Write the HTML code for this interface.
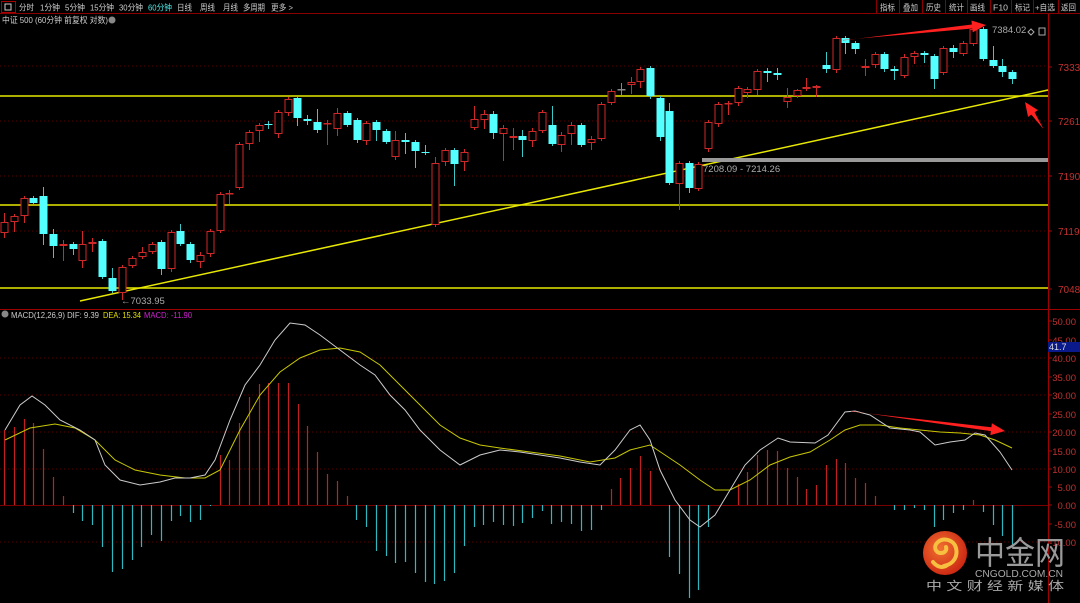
<!DOCTYPE html>
<html><head><meta charset="utf-8"><style>
html,body{margin:0;padding:0;background:#000;width:1080px;height:603px;overflow:hidden;font-family:"Liberation Sans","Noto Sans CJK SC",sans-serif}
svg{position:absolute;left:0;top:0}
</style></head><body>
<svg id="s" width="1080" height="603" xmlns="http://www.w3.org/2000/svg"></svg>
<script>
var s=document.getElementById('s'),h='';
function L(x1,y1,x2,y2,c,w,d){h+='<line x1="'+x1+'" y1="'+y1+'" x2="'+x2+'" y2="'+y2+'" stroke="'+c+'" stroke-width="'+(w||1)+'"'+(d?' stroke-dasharray="'+d+'"':'')+'/>';}
function T(x,y,t,c,sz,a,tl){h+='<text x="'+x+'" y="'+y+'" fill="'+c+'" font-size="'+(sz||10)+'"'+(a?' text-anchor="'+a+'"':'')+(tl?' textLength="'+tl+'" lengthAdjust="spacingAndGlyphs"':'')+' font-family="Liberation Sans,Noto Sans CJK SC,sans-serif">'+t+'</text>';}
// top bar
L(0,13.5,1080,13.5,'#8a0000');
h+='<rect x="1.5" y="1.5" width="14" height="11" fill="none" stroke="#a00"/><rect x="5" y="4" width="6" height="6" fill="none" stroke="#ccc"/>';
var tabs=[[19,'分时',15],[40,'1分钟',20],[65,'5分钟',20],[90,'15分钟',24],[119,'30分钟',24],[148,'60分钟',24],[177,'日线',15],[200,'周线',15],[223,'月线',15],[243,'多周期',22],[271,'更多 >',22]];
tabs.forEach(function(t){T(t[0],10.5,t[1],t[0]==148?'#4de8e8':'#ccc',8.5,null,t[2]);});
var rb=[[880,'指标',15],[903,'叠加',15],[926,'历史',15],[949,'统计',15],[970,'画线',15],[993,'F10',15],[1015,'标记',15],[1035,'+自选',20],[1061,'返回',15]];
[876,899,922,945,967,990,1011,1033,1058].forEach(function(x){L(x+.5,0,x+.5,13,'#8a0000');});
rb.forEach(function(t){T(t[0],10.5,t[1],'#ccc',8.5,null,t[2]);});
T(2,23,'中证 500 (60分钟 前复权 对数)','#ccc',8.5,null,106);
h+='<circle cx="112" cy="20" r="3.5" fill="#888"/>';
// grid
[66,121,176,231,288].forEach(function(y){L(0,y,1048,y,'#5a0000',1,'1 3');});
L(1048.5,14,1048.5,603,'#a00000');
[[67,'7333'],[121,'7261'],[176,'7190'],[231,'7119'],[289,'7048']].forEach(function(a){L(1048,a[0],1052,a[0],'#a00');T(1058,a[0]+4,a[1],'#c03030',10);});
h+='<path d="M1028 32 l3 -3 l3 3 l-3 3z" fill="none" stroke="#aaa"/><rect x="1039" y="28" width="6" height="7" fill="none" stroke="#aaa"/>';
[96,205,288].forEach(function(y){L(0,y,1048,y,'#e8e800',1.5);});
L(80,301,1048,90,'#e8e800',1.5);
h+='<rect x="702" y="158" width="346" height="4" fill="#999"/>';
T(703,172,'7208.09 - 7214.26','#aaa',9.5);
T(121,304,'←7033.95','#aaa',9.5);
T(992,33,'7384.02','#aaa',9.5);
var C=[[4,222,233,0,213,238],[14,216,222,0,214,232],[24,198,216,0,196,223],[33,198,203,1,196,205],[43,196,234,1,187,245],[53,234,246,1,229,258],[63,244,246,0,240,261],[73,244,249,1,242,255],[82,244,261,0,231,268],[92,242,244,0,238,252],[102,241,277,1,239,279],[112,278,291,1,268,293],[122,267,293,0,265,300],[132,258,266,0,256,268],[142,252,257,0,247,259],[152,244,252,0,242,254],[161,242,269,1,240,275],[171,232,269,0,230,272],[180,231,244,1,224,246],[190,244,260,1,242,263],[200,255,262,0,252,268],[210,231,254,0,229,257],[220,194,231,0,192,233],[229,193,194,0,190,204],[239,144,188,0,142,190],[249,132,144,0,130,150],[259,125,131,0,123,142],[268,124,125,1,121,129],[278,112,134,0,110,138],[288,99,113,0,97,116],[297,98,118,1,96,126],[307,119,121,1,115,125],[317,122,130,1,109,133],[327,123,124,0,120,145],[337,113,129,0,108,136],[347,113,125,1,111,127],[357,120,140,1,118,143],
[366,123,141,0,121,145],[376,122,130,1,120,141],[386,131,142,1,129,144],[395,140,157,0,131,160],[405,140,142,1,133,154],[415,142,151,1,140,168],[425,152,153,1,145,155],[435,163,225,0,157,227],[445,150,162,0,148,166],[454,150,164,1,148,186],[464,152,162,0,149,171],[474,119,128,0,106,130],[484,114,120,0,110,129],[493,114,133,1,111,139],[503,128,134,0,125,161],[513,136,138,0,128,150],[522,136,140,1,130,157],[532,131,141,0,128,147],[542,112,131,0,110,133],[552,125,144,1,106,146],[561,135,145,0,132,152],[571,125,134,0,122,145],[581,125,145,1,123,147],[591,139,143,0,136,150],[601,104,139,0,102,141],[611,91,103,0,89,105],[621,89,90,2,83,95],[631,82,85,0,77,94],[640,69,82,0,67,88],[650,68,96,1,66,99],[660,98,137,1,96,141],[669,111,183,1,103,185],[679,163,184,0,161,210],[689,163,188,1,161,193],[698,164,189,0,162,191],
[708,122,149,0,120,152],[718,104,124,0,102,127],[728,103,104,0,101,115],[738,88,103,0,86,106],[747,89,93,0,87,98],[757,71,90,0,69,95],[767,71,73,1,68,82],[777,73,75,1,68,80],[787,97,102,0,88,108],[797,90,96,0,89,98],[806,87,89,0,78,91],[816,86,88,0,85,97],[826,65,69,1,52,73],[836,38,70,0,36,73],[845,38,43,1,36,54],[855,43,49,1,41,54],[865,66,68,0,59,76],[875,54,65,0,52,68],[884,54,69,1,52,72],[894,69,71,1,66,80],[904,57,76,0,54,78],[914,53,57,0,51,64],[924,53,55,1,51,63],[934,56,79,1,54,89],[943,48,73,0,46,75],[953,48,52,1,45,58],[963,43,54,0,41,56],[973,29,44,0,27,46],[983,29,59,1,27,61],[993,60,66,1,46,68],[1002,66,72,1,59,77],[1012,72,79,1,70,84]];
C.forEach(function(c){var col=c[3]==1?'#54ffff':(c[3]==2?'#888':'#d02828');L(c[0]+.5,c[4],c[0]+.5,c[5],c[3]==1?'#3ac8c8':col);
 var hh=Math.max(c[2]-c[1],1);
 if(c[3]==1)h+='<rect x="'+(c[0]-3.5)+'" y="'+c[1]+'" width="8" height="'+hh+'" fill="#54ffff"/>';
 else h+='<rect x="'+(c[0]-3)+'" y="'+c[1]+'.5" width="7" height="'+(hh-1<1?0.5:hh-1)+'" fill="#000" stroke="'+col+'"/>';});
// MACD panel
L(0,309.5,1080,309.5,'#a00000');
h+='<circle cx="5" cy="314" r="3.5" fill="#888"/>';
T(11,318,'MACD(12,26,9) DIF: 9.39','#ccc',8.5,null,88);T(103,318,'DEA: 15.34','#e0e000',8.5,null,38);T(144,318,'MACD: -11.90','#d020d0',8.5,null,48);
[358,395,432,469,542].forEach(function(y){L(0,y,1048,y,'#5a0000',1,'1 3');});
L(0,505.5,1048,505.5,'#7a0000');
var ax=[[321,'50.00'],[340,'45.00'],[358,'40.00'],[377,'35.00'],[395,'30.00'],[414,'25.00'],[432,'20.00'],[451,'15.00'],[469,'10.00'],[487,'5.00'],[505,'0.00'],[524,'-5.00'],[542,'-10.00']];
ax.forEach(function(a){L(1048,a[0],1052,a[0],'#a00');T(1076,a[0]+4,a[1],'#c03030',9.5,'end');});
h+='<rect x="1048" y="342" width="32" height="10" fill="#0a1a8a"/>';T(1049,350,'41.7','#ddd',9);
var B=[[4,430],[14,427],[24,419],[33,423],[43,449],[53,477],[63,496],[73,513],[82,521],[92,525],[102,547],[112,572],[122,569],[132,560],[141,547],[151,535],[161,541],[171,521],[180,516],[190,522],[200,520],[210,506],[220,455],[229,460],[239,423],[249,397],[259,384],[268,383],[278,383],[288,383],[298,404],[307,426],[317,452],[327,474],[337,481],[347,496],[356,520],[366,527],[376,551],[386,556],[395,563],[405,562],[415,573],[425,582],[434,584],[444,581],[454,573],[464,546],[474,527],[483,525],[493,522],[503,525],[513,526],[522,523],[532,518],[542,511],[551,524],[561,522],[571,524],[581,531],[591,530],[601,510],[611,489],[620,478],[630,468],[640,456],[650,471],[669,557],[679,574],[689,598],[698,590],[708,527],[738,484],[747,472],[757,455],[767,450],[777,451],[787,468],[797,477],[806,489],[816,485],[826,465],[836,459],[845,463],[855,478],[865,483],[875,496],[894,510],[904,510],[914,508],[924,510],[934,527],[943,520],[953,513],[963,510],[973,500],[983,512],[993,525],[1002,536],[1012,545]];
B.forEach(function(b){L(b[0]+.5,505,b[0]+.5,b[1],b[1]<505?'#c02020':'#30b8c0',1.2);});
var DIF=[[5,430],[20,405],[32,396],[45,405],[60,420],[80,430],[95,440],[105,465],[120,480],[140,485],[160,482],[175,478],[190,478],[205,475],[215,460],[230,420],[245,385],[260,365],[275,340],[290,323],[305,325],[320,335],[340,350],[360,365],[375,375],[390,395],[405,410],[420,430],[440,450],[460,465],[480,455],[500,450],[520,452],[540,455],[560,458],[580,462],[600,465],[615,450],[630,430],[640,425],[650,440],[660,470],[675,500],[690,520],[700,527],[715,515],[730,490],[745,465],[760,450],[778,438],[790,442],[815,443],[828,435],[845,412],[855,411],[870,415],[890,428],[910,430],[920,432],[935,445],[950,442],[965,440],[975,433],[985,435],[1000,452],[1012,470]];
var DEA=[[5,440],[30,428],[55,424],[75,428],[95,440],[115,460],[135,470],[160,475],[185,478],[205,478],[220,470],[240,430],[260,395],[280,372],[300,358],[320,350],[340,348],[360,352],[380,365],[400,385],[420,405],[440,425],[460,438],[480,445],[500,448],[530,452],[560,456],[590,462],[615,458],[630,450],[650,445],[665,455],[680,465],[700,480],[715,490],[730,490],[750,480],[770,465],[790,457],[810,452],[830,440],[845,430],[860,425],[880,425],[900,428],[920,430],[940,432],[960,433],[980,435],[995,440],[1012,448]];
function P(a,c){h+='<polyline fill="none" stroke="'+c+'" stroke-width="1" points="'+a.map(function(p){return p.join(',')}).join(' ')+'"/>';}
P(DEA,'#c8c800');P(DIF,'#cccccc');
function A(x1,y1,x2,y2){var dx=x2-x1,dy=y2-y1,l=Math.sqrt(dx*dx+dy*dy),ux=dx/l,uy=dy/l,nx=-uy,ny=ux,b=14;
 var bx=x2-ux*b,by=y2-uy*b;
 h+='<polygon fill="#ff2020" points="'+x1+','+y1+' '+(bx+nx*2)+','+(by+ny*2)+' '+(bx+nx*6)+','+(by+ny*6)+' '+x2+','+y2+' '+(bx-nx*6)+','+(by-ny*6)+' '+(bx-nx*2)+','+(by-ny*2)+' '+x1+','+(y1+0.5)+'"/>';}
A(843,40,986,25);A(851,411,1005,431);A(1043,128,1025,102);
h+='<defs><radialGradient id="g" cx="0.4" cy="0.4" r="0.7"><stop offset="0" stop-color="#f07030"/><stop offset="1" stop-color="#c82010"/></radialGradient></defs>';
h+='<circle cx="945" cy="553" r="22" fill="url(#g)"/>';
h+='<path d="M944 566 c10 -2 14 -10 12 -18 c-2 -8 -12 -11 -18 -6 c-5 4 -3 11 3 11 c4 0 6 -3 5 -6 M933 562 c4 5 9 6 13 4" fill="none" stroke="#f8c040" stroke-width="4" stroke-linecap="round"/>';
T(975,564,'中金网','#9a9a9a',32,null,90);
T(975,577,'CNGOLD.COM.CN','#aaa',10,null,88);
T(926,590,'中 文 财 经 新 媒 体','#aaa',12,null,138);
s.innerHTML=h;
</script>
</body></html>
